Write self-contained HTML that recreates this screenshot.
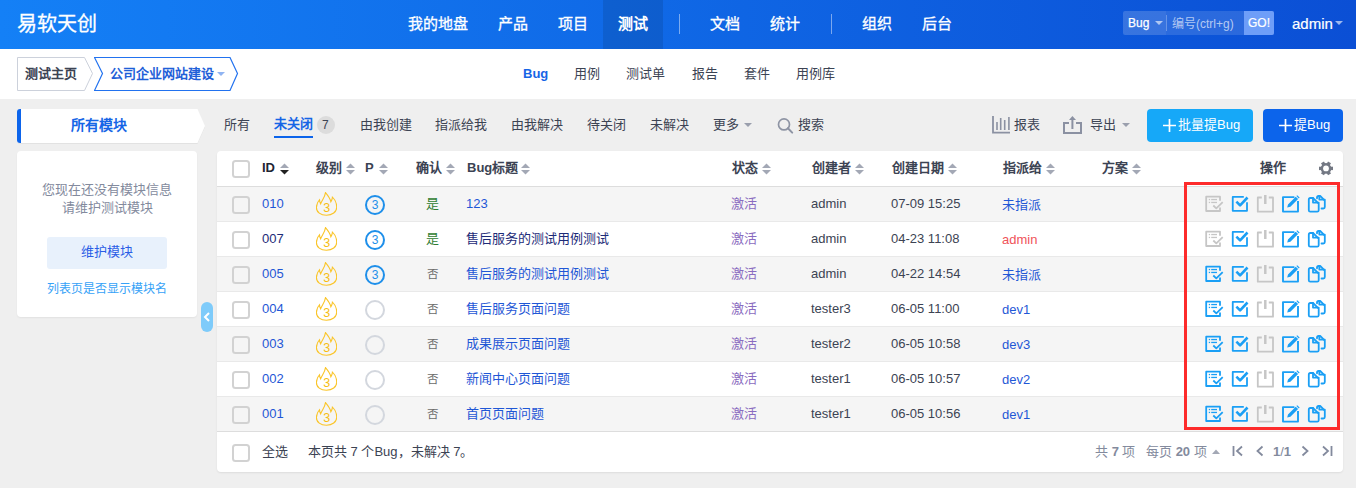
<!DOCTYPE html><html lang="zh-CN"><head><meta charset="utf-8"><style>
html,body{margin:0;padding:0}
body{width:1356px;height:488px;overflow:hidden;position:relative;background:#efefef;font-family:"Liberation Sans",sans-serif;font-size:13px;color:#3c4353}
.t{position:absolute;line-height:20px;white-space:nowrap}
</style></head><body>
<div style="position:absolute;left:0px;top:0px;width:1356px;height:49px;background:linear-gradient(90deg,#1480f6 0%,#0b4fd5 100%)"></div>
<div class="t" style="left:17px;top:14px;font-size:20px;color:#fff;-webkit-text-stroke:0.3px #fff;">易软天创</div>
<div style="position:absolute;left:603px;top:0px;width:60px;height:49px;background:rgba(0,0,0,.1)"></div>
<div class="t" style="left:408px;top:14px;font-size:15px;color:#fff;-webkit-text-stroke:0.3px #fff;">我的地盘</div>
<div class="t" style="left:498px;top:14px;font-size:15px;color:#fff;-webkit-text-stroke:0.3px #fff;">产品</div>
<div class="t" style="left:558px;top:14px;font-size:15px;color:#fff;-webkit-text-stroke:0.3px #fff;">项目</div>
<div class="t" style="left:618px;top:14px;font-size:15px;color:#fff;font-weight:bold;">测试</div>
<div class="t" style="left:710px;top:14px;font-size:15px;color:#fff;-webkit-text-stroke:0.3px #fff;">文档</div>
<div class="t" style="left:770px;top:14px;font-size:15px;color:#fff;-webkit-text-stroke:0.3px #fff;">统计</div>
<div class="t" style="left:862px;top:14px;font-size:15px;color:#fff;-webkit-text-stroke:0.3px #fff;">组织</div>
<div class="t" style="left:922px;top:14px;font-size:15px;color:#fff;-webkit-text-stroke:0.3px #fff;">后台</div>
<div style="position:absolute;left:679px;top:14px;width:1px;height:20px;background:rgba(255,255,255,.45)"></div>
<div style="position:absolute;left:831px;top:14px;width:1px;height:20px;background:rgba(255,255,255,.45)"></div>
<div style="position:absolute;left:1123px;top:11px;width:151px;height:24px;background:rgba(255,255,255,.13);border-radius:2px"></div>
<div style="position:absolute;left:1123px;top:11px;width:43px;height:24px;background:rgba(255,255,255,.06);border-radius:2px 0 0 2px"></div>
<div style="position:absolute;left:1166px;top:15px;width:1px;height:16px;background:rgba(255,255,255,.28)"></div>
<div class="t" style="left:1128px;top:13px;font-size:12px;color:#fff;-webkit-text-stroke:0.25px #fff;">Bug</div>
<svg style="position:absolute;left:1155px;top:21px" width="8" height="4" viewBox="0 0 8 4"><path d="M0 0H8L4 4Z" fill="rgba(255,255,255,.6)"/></svg>
<div class="t" style="left:1172px;top:14px;font-size:12px;color:rgba(255,255,255,.65);">编号(ctrl+g)</div>
<div style="position:absolute;left:1244px;top:11px;width:30px;height:24px;background:#6e9ef8;border-radius:0 2px 2px 0"></div>
<div class="t" style="left:1248px;top:13px;font-size:12px;color:#fff;-webkit-text-stroke:0.2px #fff;">GO!</div>
<div class="t" style="left:1292px;top:14px;font-size:15px;color:#fff;-webkit-text-stroke:0.2px #fff;">admin</div>
<svg style="position:absolute;left:1335px;top:21px" width="8" height="4" viewBox="0 0 8 4"><path d="M0 0H8L4 4Z" fill="rgba(255,255,255,.6)"/></svg>
<div style="position:absolute;left:0px;top:49px;width:1356px;height:50px;background:#fff"></div>
<svg style="position:absolute;left:17px;top:57px" width="80" height="34" viewBox="0 0 80 34"><path d="M0.5 0.5H67.5L75.5 16.5L67.5 33.5H0.5Z" fill="#fff" stroke="#ccd1db"/></svg>
<div class="t" style="left:25px;top:64px;font-size:13px;color:#3c4353;font-weight:bold;">测试主页</div>
<svg style="position:absolute;left:94px;top:57px" width="146" height="34" viewBox="0 0 146 34"><path d="M0.5 0.5H136L143.5 16.5L136 33.5H0.5L8.5 16.5Z" fill="#fff" stroke="#2272ef" stroke-width="1.2"/></svg>
<div class="t" style="left:110px;top:64px;font-size:13px;color:#1f5fd8;font-weight:bold;">公司企业网站建设</div>
<svg style="position:absolute;left:217px;top:72px" width="8" height="4" viewBox="0 0 8 4"><path d="M0 0H8L4 4Z" fill="#90b4f2"/></svg>
<div class="t" style="left:523px;top:64px;font-size:13px;color:#1565e6;font-weight:bold;">Bug</div>
<div class="t" style="left:574px;top:64px;font-size:13px;color:#3c4353;">用例</div>
<div class="t" style="left:626px;top:64px;font-size:13px;color:#3c4353;">测试单</div>
<div class="t" style="left:692px;top:64px;font-size:13px;color:#3c4353;">报告</div>
<div class="t" style="left:744px;top:64px;font-size:13px;color:#3c4353;">套件</div>
<div class="t" style="left:796px;top:64px;font-size:13px;color:#3c4353;">用例库</div>
<svg style="position:absolute;left:17px;top:109px" width="190" height="36" viewBox="0 0 190 36"><path d="M3 1H180.5L188 18L180.5 35H3Q0 35 0 32V4Q0 1 3 1Z" fill="rgba(0,0,0,.05)"/><path d="M3 0H180.5L188 17L180.5 34H3Q0 34 0 31V3Q0 0 3 0Z" fill="#fff"/><path d="M3 0H4V34H3Q0 34 0 31V3Q0 0 3 0Z" fill="#0c64eb"/></svg>
<div class="t" style="left:71px;top:115px;font-size:14px;color:#1565e6;font-weight:bold;">所有模块</div>
<div style="position:absolute;left:17px;top:151px;width:180px;height:166px;background:#fff;border-radius:4px;box-shadow:0 1px 2px rgba(0,0,0,.06)"></div>
<div class="t" style="left:42px;top:180px;font-size:13px;color:#838a9d;">您现在还没有模块信息</div>
<div class="t" style="left:62px;top:198px;font-size:13px;color:#838a9d;">请维护测试模块</div>
<div style="position:absolute;left:47px;top:237px;width:120px;height:32px;background:#e8f1fc;border-radius:3px"></div>
<div class="t" style="left:81px;top:242px;font-size:13px;color:#2a5de6;">维护模块</div>
<div class="t" style="left:47px;top:279px;font-size:12px;color:#36a2f7;">列表页是否显示模块名</div>
<div style="position:absolute;left:201px;top:302px;width:12px;height:30px;background:#7ecbfa;border-radius:6px"></div>
<svg style="position:absolute;left:201px;top:310px" width="12" height="14" viewBox="0 0 12 14"><path d="M8 3L4 7L8 11" fill="none" stroke="#fff" stroke-width="2"/></svg>
<div class="t" style="left:224px;top:115px;font-size:13px;color:#3c4353;">所有</div>
<div class="t" style="left:274px;top:114px;font-size:13px;color:#1565e6;font-weight:bold;">未关闭</div>
<div style="position:absolute;left:274px;top:136px;width:39px;height:2px;background:#0c64eb"></div>
<div style="position:absolute;left:317px;top:116px;width:18px;height:18px;background:#dcdcdc;border-radius:9px"></div>
<div class="t" style="left:322px;top:115px;font-size:12px;color:#3c4353;">7</div>
<div class="t" style="left:360px;top:115px;font-size:13px;color:#3c4353;">由我创建</div>
<div class="t" style="left:435px;top:115px;font-size:13px;color:#3c4353;">指派给我</div>
<div class="t" style="left:511px;top:115px;font-size:13px;color:#3c4353;">由我解决</div>
<div class="t" style="left:587px;top:115px;font-size:13px;color:#3c4353;">待关闭</div>
<div class="t" style="left:650px;top:115px;font-size:13px;color:#3c4353;">未解决</div>
<div class="t" style="left:713px;top:115px;font-size:13px;color:#3c4353;">更多</div>
<svg style="position:absolute;left:744px;top:123px" width="8" height="4" viewBox="0 0 8 4"><path d="M0 0H8L4 4Z" fill="#9a9fad"/></svg>
<svg style="position:absolute;left:777px;top:118px" width="17" height="17" viewBox="0 0 17 17"><circle cx="7" cy="6.4" r="5.5" fill="none" stroke="#8e94a4" stroke-width="1.7"/><path d="M10.9 10.3L15.2 14.6" stroke="#8e94a4" stroke-width="2" stroke-linecap="round"/></svg>
<div class="t" style="left:798px;top:115px;font-size:13px;color:#3c4353;">搜索</div>
<svg style="position:absolute;left:991px;top:115px" width="20" height="19" viewBox="0 0 20 19"><path d="M2 1V17.7H19" fill="none" stroke="#8b91a2" stroke-width="1.8"/><path d="M6 7V15M9.7 3V15M13.7 5V15M17.9 2V15" stroke="#8b91a2" stroke-width="1.6"/></svg>
<div class="t" style="left:1014px;top:115px;font-size:13px;color:#3c4353;">报表</div>
<svg style="position:absolute;left:1062px;top:115px" width="21" height="19" viewBox="0 0 21 19"><path d="M7 8H2V18H19V8H14" fill="none" stroke="#8b91a2" stroke-width="2"/><path d="M10.4 4V14" stroke="#8b91a2" stroke-width="2"/><path d="M7 5L10.4 1L14 5Z" fill="#8b91a2"/></svg>
<div class="t" style="left:1090px;top:115px;font-size:13px;color:#3c4353;">导出</div>
<svg style="position:absolute;left:1122px;top:123px" width="8" height="4" viewBox="0 0 8 4"><path d="M0 0H8L4 4Z" fill="#9a9fad"/></svg>
<div style="position:absolute;left:1147px;top:109px;width:106px;height:33px;background:#16a8f8;border-radius:4px"></div>
<svg style="position:absolute;left:1163px;top:119px" width="13" height="13" viewBox="0 0 13 13"><path d="M6.5 0V13M0 6.5H13" stroke="#fff" stroke-width="1.7"/></svg>
<div class="t" style="left:1178px;top:115px;font-size:13px;color:#fff;">批量提Bug</div>
<div style="position:absolute;left:1263px;top:109px;width:80px;height:33px;background:#0c64eb;border-radius:4px"></div>
<svg style="position:absolute;left:1279px;top:119px" width="13" height="13" viewBox="0 0 13 13"><path d="M6.5 0V13M0 6.5H13" stroke="#fff" stroke-width="1.7"/></svg>
<div class="t" style="left:1294px;top:115px;font-size:13px;color:#fff;">提Bug</div>
<div style="position:absolute;left:217px;top:151px;width:1126px;height:321px;background:#fff;border-radius:4px;box-shadow:0 1px 2px rgba(0,0,0,.08)"></div>
<div style="position:absolute;left:217px;top:186px;width:1126px;height:1px;background:#ddd"></div>
<div style="position:absolute;left:232px;top:160px;width:14px;height:14px;border:2px solid #d2d2d2;border-radius:3.5px"></div>
<div class="t" style="left:262px;top:158px;font-size:13px;color:#1f2533;font-weight:bold;">ID</div>
<svg style="position:absolute;left:279.5px;top:162.8px" width="9" height="12" viewBox="0 0 9 12"><path d="M0 5L4.5 0.5L9 5Z" fill="#a3a8b5"/><path d="M0 7L4.5 11.5L9 7Z" fill="#222"/></svg>
<div class="t" style="left:316px;top:158px;font-size:13px;color:#3c4353;font-weight:bold;">级别</div>
<svg style="position:absolute;left:345.5px;top:162.8px" width="9" height="12" viewBox="0 0 9 12"><path d="M0 5L4.5 0.5L9 5Z" fill="#a3a8b5"/><path d="M0 7L4.5 11.5L9 7Z" fill="#a3a8b5"/></svg>
<div class="t" style="left:365px;top:158px;font-size:13px;color:#3c4353;font-weight:bold;">P</div>
<svg style="position:absolute;left:378.5px;top:162.8px" width="9" height="12" viewBox="0 0 9 12"><path d="M0 5L4.5 0.5L9 5Z" fill="#a3a8b5"/><path d="M0 7L4.5 11.5L9 7Z" fill="#a3a8b5"/></svg>
<div class="t" style="left:416px;top:158px;font-size:13px;color:#3c4353;font-weight:bold;">确认</div>
<svg style="position:absolute;left:445.5px;top:162.8px" width="9" height="12" viewBox="0 0 9 12"><path d="M0 5L4.5 0.5L9 5Z" fill="#a3a8b5"/><path d="M0 7L4.5 11.5L9 7Z" fill="#a3a8b5"/></svg>
<div class="t" style="left:467px;top:158px;font-size:13px;color:#3c4353;font-weight:bold;">Bug标题</div>
<svg style="position:absolute;left:520.5px;top:162.8px" width="9" height="12" viewBox="0 0 9 12"><path d="M0 5L4.5 0.5L9 5Z" fill="#a3a8b5"/><path d="M0 7L4.5 11.5L9 7Z" fill="#a3a8b5"/></svg>
<div class="t" style="left:732px;top:158px;font-size:13px;color:#3c4353;font-weight:bold;">状态</div>
<svg style="position:absolute;left:761.5px;top:162.8px" width="9" height="12" viewBox="0 0 9 12"><path d="M0 5L4.5 0.5L9 5Z" fill="#a3a8b5"/><path d="M0 7L4.5 11.5L9 7Z" fill="#a3a8b5"/></svg>
<div class="t" style="left:812px;top:158px;font-size:13px;color:#3c4353;font-weight:bold;">创建者</div>
<svg style="position:absolute;left:854.5px;top:162.8px" width="9" height="12" viewBox="0 0 9 12"><path d="M0 5L4.5 0.5L9 5Z" fill="#a3a8b5"/><path d="M0 7L4.5 11.5L9 7Z" fill="#a3a8b5"/></svg>
<div class="t" style="left:892px;top:158px;font-size:13px;color:#3c4353;font-weight:bold;">创建日期</div>
<svg style="position:absolute;left:947.5px;top:162.8px" width="9" height="12" viewBox="0 0 9 12"><path d="M0 5L4.5 0.5L9 5Z" fill="#a3a8b5"/><path d="M0 7L4.5 11.5L9 7Z" fill="#a3a8b5"/></svg>
<div class="t" style="left:1003px;top:158px;font-size:13px;color:#3c4353;font-weight:bold;">指派给</div>
<svg style="position:absolute;left:1045.5px;top:162.8px" width="9" height="12" viewBox="0 0 9 12"><path d="M0 5L4.5 0.5L9 5Z" fill="#a3a8b5"/><path d="M0 7L4.5 11.5L9 7Z" fill="#a3a8b5"/></svg>
<div class="t" style="left:1102px;top:158px;font-size:13px;color:#3c4353;font-weight:bold;">方案</div>
<svg style="position:absolute;left:1131.5px;top:162.8px" width="9" height="12" viewBox="0 0 9 12"><path d="M0 5L4.5 0.5L9 5Z" fill="#a3a8b5"/><path d="M0 7L4.5 11.5L9 7Z" fill="#a3a8b5"/></svg>
<div class="t" style="left:1260px;top:158px;font-size:13px;color:#3c4353;font-weight:bold;">操作</div>
<svg style="position:absolute;left:1319px;top:161px" width="15" height="15" viewBox="0 0 15 15"><g fill="#737883"><circle cx="7" cy="7.4" r="5.3"/><rect x="5.3" y="0.4" width="3.4" height="3.2" transform="rotate(30 7 7.4)"/><rect x="5.3" y="0.4" width="3.4" height="3.2" transform="rotate(90 7 7.4)"/><rect x="5.3" y="0.4" width="3.4" height="3.2" transform="rotate(150 7 7.4)"/><rect x="5.3" y="0.4" width="3.4" height="3.2" transform="rotate(210 7 7.4)"/><rect x="5.3" y="0.4" width="3.4" height="3.2" transform="rotate(270 7 7.4)"/><rect x="5.3" y="0.4" width="3.4" height="3.2" transform="rotate(330 7 7.4)"/></g><circle cx="7" cy="7.4" r="2.9" fill="#fff"/></svg>
<div style="position:absolute;left:217px;top:187px;width:1126px;height:34px;background:#f5f5f5"></div>
<div style="position:absolute;left:217px;top:221px;width:1126px;height:1px;background:#e9e9e9"></div>
<div style="position:absolute;left:232px;top:196px;width:14px;height:14px;border:2px solid #d2d2d2;border-radius:3.5px"></div>
<div class="t" style="left:262px;top:194px;font-size:13px;color:#1f57d6;">010</div>
<svg style="position:absolute;left:316px;top:192px" width="21" height="25" viewBox="0 0 21 25"><path d="M4.6 11.8C6 8 9 5 9.5 0.6C12 3.5 14 6 14.9 9.8C15.8 8.3 16.3 6.8 16.4 5.2C19.2 7.8 20.7 11 20.7 15.2C20.7 20 16.2 23.3 10.4 23.3C4.6 23.3 0.4 20 0.4 15.6C0.4 12.6 1.6 9.8 3.5 7.75C3.6 9.3 4 10.7 4.6 11.8Z" fill="none" stroke="#fac52a" stroke-width="1.1"/><text x="10.8" y="19.5" text-anchor="middle" font-size="12.5" fill="#f6bd12" transform="scale(1 1)" font-family="Liberation Sans">3</text></svg>
<svg style="position:absolute;left:365px;top:195px" width="20" height="20" viewBox="0 0 20 20"><circle cx="10" cy="10" r="9" fill="none" stroke="#1e8fea" stroke-width="2"/><text x="10" y="14.2" text-anchor="middle" font-size="12" fill="#1e8fea" font-family="Liberation Sans">3</text></svg>
<div class="t" style="left:426px;top:194px;font-size:13px;color:#2f7d32;">是</div>
<div class="t" style="left:466px;top:194px;font-size:13px;color:#1f57d6;">123</div>
<div class="t" style="left:731px;top:194px;font-size:13px;color:#8a6bc0;">激活</div>
<div class="t" style="left:811px;top:194px;font-size:13px;color:#3c4353;">admin</div>
<div class="t" style="left:891px;top:194px;font-size:13px;color:#3c4353;">07-09 15:25</div>
<div class="t" style="left:1002px;top:195px;font-size:13px;color:#1f57d6;">未指派</div>
<svg style="position:absolute;left:1204px;top:195px" width="21" height="19" viewBox="0 0 21 19"><g fill="none" stroke="#c6c6c6" stroke-width="1.8" stroke-linejoin="round"><path d="M16 5.8V1.7H2.2V16H16V12.6"/><path d="M9.3 10.5L12.3 13.4L18.7 7.2"/></g><g fill="#c6c6c6"><rect x="4.8" y="3.9" width="1.3" height="1.3"/><rect x="7.2" y="3.9" width="5.8" height="1.3"/><rect x="4.8" y="6.8" width="1.3" height="1.3"/><rect x="7.2" y="6.8" width="5.8" height="1.3"/></g></svg>
<svg style="position:absolute;left:1231px;top:195px" width="19" height="18" viewBox="0 0 19 18"><g fill="none" stroke="#1a9ff5" stroke-linejoin="round"><path d="M12.8 1.9H1.75V15.8H16V7.2" stroke-width="1.8"/><path d="M5.4 6.6L9.1 10.3L16.5 2.5" stroke-width="2.6"/></g></svg>
<svg style="position:absolute;left:1256px;top:194px" width="19" height="20" viewBox="0 0 19 20"><g fill="none" stroke="#c6c6c6" stroke-linejoin="round"><path d="M5.8 3.5H1.8V17.7H17V3.5H12.8" stroke-width="1.8"/><path d="M9.3 1V10" stroke-width="2.5"/></g></svg>
<svg style="position:absolute;left:1281px;top:194px" width="20" height="20" viewBox="0 0 20 20"><g fill="none" stroke="#1a9ff5" stroke-width="1.9" stroke-linejoin="round"><path d="M13.4 3.1H2V17.6H17V7"/></g><path d="M6.2 13.6L7 10.4L14.7 2.7L17.1 5.1L9.4 12.8Z M15.4 2L16.2 1.2L18.6 3.6L17.8 4.4Z" fill="#1a9ff5"/></svg>
<svg style="position:absolute;left:1307px;top:194px" width="20" height="20" viewBox="0 0 20 20"><g fill="none" stroke="#1a9ff5" stroke-width="1.8" stroke-linejoin="round" stroke-linecap="round"><path d="M6 4H3.3Q1.8 4 1.8 5.5V16.2Q1.8 17.7 3.3 17.7H10.2Q11.7 17.7 11.7 16.2V9.7Z"/><path d="M6 4V8.6H11.7"/><path d="M10 4.3V3.5Q10 2 11.5 2H13.2L17.8 6.6V13Q17.8 14.5 16.3 14.5H14.5"/><path d="M12.3 2V5.6H17.8"/></g></svg>
<div style="position:absolute;left:217px;top:256px;width:1126px;height:1px;background:#e9e9e9"></div>
<div style="position:absolute;left:232px;top:231px;width:14px;height:14px;border:2px solid #d2d2d2;border-radius:3.5px"></div>
<div class="t" style="left:262px;top:229px;font-size:13px;color:#1d2b78;">007</div>
<svg style="position:absolute;left:316px;top:227px" width="21" height="25" viewBox="0 0 21 25"><path d="M4.6 11.8C6 8 9 5 9.5 0.6C12 3.5 14 6 14.9 9.8C15.8 8.3 16.3 6.8 16.4 5.2C19.2 7.8 20.7 11 20.7 15.2C20.7 20 16.2 23.3 10.4 23.3C4.6 23.3 0.4 20 0.4 15.6C0.4 12.6 1.6 9.8 3.5 7.75C3.6 9.3 4 10.7 4.6 11.8Z" fill="none" stroke="#fac52a" stroke-width="1.1"/><text x="10.8" y="19.5" text-anchor="middle" font-size="12.5" fill="#f6bd12" transform="scale(1 1)" font-family="Liberation Sans">3</text></svg>
<svg style="position:absolute;left:365px;top:230px" width="20" height="20" viewBox="0 0 20 20"><circle cx="10" cy="10" r="9" fill="none" stroke="#1e8fea" stroke-width="2"/><text x="10" y="14.2" text-anchor="middle" font-size="12" fill="#1e8fea" font-family="Liberation Sans">3</text></svg>
<div class="t" style="left:426px;top:229px;font-size:13px;color:#2f7d32;">是</div>
<div class="t" style="left:466px;top:229px;font-size:13px;color:#1d2b78;">售后服务的测试用例测试</div>
<div class="t" style="left:731px;top:229px;font-size:13px;color:#8a6bc0;">激活</div>
<div class="t" style="left:811px;top:229px;font-size:13px;color:#3c4353;">admin</div>
<div class="t" style="left:891px;top:229px;font-size:13px;color:#3c4353;">04-23 11:08</div>
<div class="t" style="left:1002px;top:230px;font-size:13px;color:#f0535a;">admin</div>
<svg style="position:absolute;left:1204px;top:230px" width="21" height="19" viewBox="0 0 21 19"><g fill="none" stroke="#c6c6c6" stroke-width="1.8" stroke-linejoin="round"><path d="M16 5.8V1.7H2.2V16H16V12.6"/><path d="M9.3 10.5L12.3 13.4L18.7 7.2"/></g><g fill="#c6c6c6"><rect x="4.8" y="3.9" width="1.3" height="1.3"/><rect x="7.2" y="3.9" width="5.8" height="1.3"/><rect x="4.8" y="6.8" width="1.3" height="1.3"/><rect x="7.2" y="6.8" width="5.8" height="1.3"/></g></svg>
<svg style="position:absolute;left:1231px;top:230px" width="19" height="18" viewBox="0 0 19 18"><g fill="none" stroke="#1a9ff5" stroke-linejoin="round"><path d="M12.8 1.9H1.75V15.8H16V7.2" stroke-width="1.8"/><path d="M5.4 6.6L9.1 10.3L16.5 2.5" stroke-width="2.6"/></g></svg>
<svg style="position:absolute;left:1256px;top:229px" width="19" height="20" viewBox="0 0 19 20"><g fill="none" stroke="#c6c6c6" stroke-linejoin="round"><path d="M5.8 3.5H1.8V17.7H17V3.5H12.8" stroke-width="1.8"/><path d="M9.3 1V10" stroke-width="2.5"/></g></svg>
<svg style="position:absolute;left:1281px;top:229px" width="20" height="20" viewBox="0 0 20 20"><g fill="none" stroke="#1a9ff5" stroke-width="1.9" stroke-linejoin="round"><path d="M13.4 3.1H2V17.6H17V7"/></g><path d="M6.2 13.6L7 10.4L14.7 2.7L17.1 5.1L9.4 12.8Z M15.4 2L16.2 1.2L18.6 3.6L17.8 4.4Z" fill="#1a9ff5"/></svg>
<svg style="position:absolute;left:1307px;top:229px" width="20" height="20" viewBox="0 0 20 20"><g fill="none" stroke="#1a9ff5" stroke-width="1.8" stroke-linejoin="round" stroke-linecap="round"><path d="M6 4H3.3Q1.8 4 1.8 5.5V16.2Q1.8 17.7 3.3 17.7H10.2Q11.7 17.7 11.7 16.2V9.7Z"/><path d="M6 4V8.6H11.7"/><path d="M10 4.3V3.5Q10 2 11.5 2H13.2L17.8 6.6V13Q17.8 14.5 16.3 14.5H14.5"/><path d="M12.3 2V5.6H17.8"/></g></svg>
<div style="position:absolute;left:217px;top:257px;width:1126px;height:34px;background:#f5f5f5"></div>
<div style="position:absolute;left:217px;top:291px;width:1126px;height:1px;background:#e9e9e9"></div>
<div style="position:absolute;left:232px;top:266px;width:14px;height:14px;border:2px solid #d2d2d2;border-radius:3.5px"></div>
<div class="t" style="left:262px;top:264px;font-size:13px;color:#1f57d6;">005</div>
<svg style="position:absolute;left:316px;top:262px" width="21" height="25" viewBox="0 0 21 25"><path d="M4.6 11.8C6 8 9 5 9.5 0.6C12 3.5 14 6 14.9 9.8C15.8 8.3 16.3 6.8 16.4 5.2C19.2 7.8 20.7 11 20.7 15.2C20.7 20 16.2 23.3 10.4 23.3C4.6 23.3 0.4 20 0.4 15.6C0.4 12.6 1.6 9.8 3.5 7.75C3.6 9.3 4 10.7 4.6 11.8Z" fill="none" stroke="#fac52a" stroke-width="1.1"/><text x="10.8" y="19.5" text-anchor="middle" font-size="12.5" fill="#f6bd12" transform="scale(1 1)" font-family="Liberation Sans">3</text></svg>
<svg style="position:absolute;left:365px;top:265px" width="20" height="20" viewBox="0 0 20 20"><circle cx="10" cy="10" r="9" fill="none" stroke="#1e8fea" stroke-width="2"/><text x="10" y="14.2" text-anchor="middle" font-size="12" fill="#1e8fea" font-family="Liberation Sans">3</text></svg>
<div class="t" style="left:426.5px;top:264px;font-size:11.5px;color:#6b6b6b;">否</div>
<div class="t" style="left:466px;top:264px;font-size:13px;color:#1f57d6;">售后服务的测试用例测试</div>
<div class="t" style="left:731px;top:264px;font-size:13px;color:#8a6bc0;">激活</div>
<div class="t" style="left:811px;top:264px;font-size:13px;color:#3c4353;">admin</div>
<div class="t" style="left:891px;top:264px;font-size:13px;color:#3c4353;">04-22 14:54</div>
<div class="t" style="left:1002px;top:265px;font-size:13px;color:#1f57d6;">未指派</div>
<svg style="position:absolute;left:1204px;top:265px" width="21" height="19" viewBox="0 0 21 19"><g fill="none" stroke="#1a9ff5" stroke-width="1.8" stroke-linejoin="round"><path d="M16 5.8V1.7H2.2V16H16V12.6"/><path d="M9.3 10.5L12.3 13.4L18.7 7.2"/></g><g fill="#1a9ff5"><rect x="4.8" y="3.9" width="1.3" height="1.3"/><rect x="7.2" y="3.9" width="5.8" height="1.3"/><rect x="4.8" y="6.8" width="1.3" height="1.3"/><rect x="7.2" y="6.8" width="5.8" height="1.3"/></g></svg>
<svg style="position:absolute;left:1231px;top:265px" width="19" height="18" viewBox="0 0 19 18"><g fill="none" stroke="#1a9ff5" stroke-linejoin="round"><path d="M12.8 1.9H1.75V15.8H16V7.2" stroke-width="1.8"/><path d="M5.4 6.6L9.1 10.3L16.5 2.5" stroke-width="2.6"/></g></svg>
<svg style="position:absolute;left:1256px;top:264px" width="19" height="20" viewBox="0 0 19 20"><g fill="none" stroke="#c6c6c6" stroke-linejoin="round"><path d="M5.8 3.5H1.8V17.7H17V3.5H12.8" stroke-width="1.8"/><path d="M9.3 1V10" stroke-width="2.5"/></g></svg>
<svg style="position:absolute;left:1281px;top:264px" width="20" height="20" viewBox="0 0 20 20"><g fill="none" stroke="#1a9ff5" stroke-width="1.9" stroke-linejoin="round"><path d="M13.4 3.1H2V17.6H17V7"/></g><path d="M6.2 13.6L7 10.4L14.7 2.7L17.1 5.1L9.4 12.8Z M15.4 2L16.2 1.2L18.6 3.6L17.8 4.4Z" fill="#1a9ff5"/></svg>
<svg style="position:absolute;left:1307px;top:264px" width="20" height="20" viewBox="0 0 20 20"><g fill="none" stroke="#1a9ff5" stroke-width="1.8" stroke-linejoin="round" stroke-linecap="round"><path d="M6 4H3.3Q1.8 4 1.8 5.5V16.2Q1.8 17.7 3.3 17.7H10.2Q11.7 17.7 11.7 16.2V9.7Z"/><path d="M6 4V8.6H11.7"/><path d="M10 4.3V3.5Q10 2 11.5 2H13.2L17.8 6.6V13Q17.8 14.5 16.3 14.5H14.5"/><path d="M12.3 2V5.6H17.8"/></g></svg>
<div style="position:absolute;left:217px;top:326px;width:1126px;height:1px;background:#e9e9e9"></div>
<div style="position:absolute;left:232px;top:301px;width:14px;height:14px;border:2px solid #d2d2d2;border-radius:3.5px"></div>
<div class="t" style="left:262px;top:299px;font-size:13px;color:#1f57d6;">004</div>
<svg style="position:absolute;left:316px;top:297px" width="21" height="25" viewBox="0 0 21 25"><path d="M4.6 11.8C6 8 9 5 9.5 0.6C12 3.5 14 6 14.9 9.8C15.8 8.3 16.3 6.8 16.4 5.2C19.2 7.8 20.7 11 20.7 15.2C20.7 20 16.2 23.3 10.4 23.3C4.6 23.3 0.4 20 0.4 15.6C0.4 12.6 1.6 9.8 3.5 7.75C3.6 9.3 4 10.7 4.6 11.8Z" fill="none" stroke="#fac52a" stroke-width="1.1"/><text x="10.8" y="19.5" text-anchor="middle" font-size="12.5" fill="#f6bd12" transform="scale(1 1)" font-family="Liberation Sans">3</text></svg>
<svg style="position:absolute;left:365px;top:300px" width="20" height="20" viewBox="0 0 20 20"><circle cx="10" cy="10" r="9" fill="none" stroke="#d3d7de" stroke-width="2"/></svg>
<div class="t" style="left:426.5px;top:299px;font-size:11.5px;color:#6b6b6b;">否</div>
<div class="t" style="left:466px;top:299px;font-size:13px;color:#1f57d6;">售后服务页面问题</div>
<div class="t" style="left:731px;top:299px;font-size:13px;color:#8a6bc0;">激活</div>
<div class="t" style="left:811px;top:299px;font-size:13px;color:#3c4353;">tester3</div>
<div class="t" style="left:891px;top:299px;font-size:13px;color:#3c4353;">06-05 11:00</div>
<div class="t" style="left:1002px;top:300px;font-size:13px;color:#1f57d6;">dev1</div>
<svg style="position:absolute;left:1204px;top:300px" width="21" height="19" viewBox="0 0 21 19"><g fill="none" stroke="#1a9ff5" stroke-width="1.8" stroke-linejoin="round"><path d="M16 5.8V1.7H2.2V16H16V12.6"/><path d="M9.3 10.5L12.3 13.4L18.7 7.2"/></g><g fill="#1a9ff5"><rect x="4.8" y="3.9" width="1.3" height="1.3"/><rect x="7.2" y="3.9" width="5.8" height="1.3"/><rect x="4.8" y="6.8" width="1.3" height="1.3"/><rect x="7.2" y="6.8" width="5.8" height="1.3"/></g></svg>
<svg style="position:absolute;left:1231px;top:300px" width="19" height="18" viewBox="0 0 19 18"><g fill="none" stroke="#1a9ff5" stroke-linejoin="round"><path d="M12.8 1.9H1.75V15.8H16V7.2" stroke-width="1.8"/><path d="M5.4 6.6L9.1 10.3L16.5 2.5" stroke-width="2.6"/></g></svg>
<svg style="position:absolute;left:1256px;top:299px" width="19" height="20" viewBox="0 0 19 20"><g fill="none" stroke="#c6c6c6" stroke-linejoin="round"><path d="M5.8 3.5H1.8V17.7H17V3.5H12.8" stroke-width="1.8"/><path d="M9.3 1V10" stroke-width="2.5"/></g></svg>
<svg style="position:absolute;left:1281px;top:299px" width="20" height="20" viewBox="0 0 20 20"><g fill="none" stroke="#1a9ff5" stroke-width="1.9" stroke-linejoin="round"><path d="M13.4 3.1H2V17.6H17V7"/></g><path d="M6.2 13.6L7 10.4L14.7 2.7L17.1 5.1L9.4 12.8Z M15.4 2L16.2 1.2L18.6 3.6L17.8 4.4Z" fill="#1a9ff5"/></svg>
<svg style="position:absolute;left:1307px;top:299px" width="20" height="20" viewBox="0 0 20 20"><g fill="none" stroke="#1a9ff5" stroke-width="1.8" stroke-linejoin="round" stroke-linecap="round"><path d="M6 4H3.3Q1.8 4 1.8 5.5V16.2Q1.8 17.7 3.3 17.7H10.2Q11.7 17.7 11.7 16.2V9.7Z"/><path d="M6 4V8.6H11.7"/><path d="M10 4.3V3.5Q10 2 11.5 2H13.2L17.8 6.6V13Q17.8 14.5 16.3 14.5H14.5"/><path d="M12.3 2V5.6H17.8"/></g></svg>
<div style="position:absolute;left:217px;top:327px;width:1126px;height:34px;background:#f5f5f5"></div>
<div style="position:absolute;left:217px;top:361px;width:1126px;height:1px;background:#e9e9e9"></div>
<div style="position:absolute;left:232px;top:336px;width:14px;height:14px;border:2px solid #d2d2d2;border-radius:3.5px"></div>
<div class="t" style="left:262px;top:334px;font-size:13px;color:#1f57d6;">003</div>
<svg style="position:absolute;left:316px;top:332px" width="21" height="25" viewBox="0 0 21 25"><path d="M4.6 11.8C6 8 9 5 9.5 0.6C12 3.5 14 6 14.9 9.8C15.8 8.3 16.3 6.8 16.4 5.2C19.2 7.8 20.7 11 20.7 15.2C20.7 20 16.2 23.3 10.4 23.3C4.6 23.3 0.4 20 0.4 15.6C0.4 12.6 1.6 9.8 3.5 7.75C3.6 9.3 4 10.7 4.6 11.8Z" fill="none" stroke="#fac52a" stroke-width="1.1"/><text x="10.8" y="19.5" text-anchor="middle" font-size="12.5" fill="#f6bd12" transform="scale(1 1)" font-family="Liberation Sans">3</text></svg>
<svg style="position:absolute;left:365px;top:335px" width="20" height="20" viewBox="0 0 20 20"><circle cx="10" cy="10" r="9" fill="none" stroke="#d3d7de" stroke-width="2"/></svg>
<div class="t" style="left:426.5px;top:334px;font-size:11.5px;color:#6b6b6b;">否</div>
<div class="t" style="left:466px;top:334px;font-size:13px;color:#1f57d6;">成果展示页面问题</div>
<div class="t" style="left:731px;top:334px;font-size:13px;color:#8a6bc0;">激活</div>
<div class="t" style="left:811px;top:334px;font-size:13px;color:#3c4353;">tester2</div>
<div class="t" style="left:891px;top:334px;font-size:13px;color:#3c4353;">06-05 10:58</div>
<div class="t" style="left:1002px;top:335px;font-size:13px;color:#1f57d6;">dev3</div>
<svg style="position:absolute;left:1204px;top:335px" width="21" height="19" viewBox="0 0 21 19"><g fill="none" stroke="#1a9ff5" stroke-width="1.8" stroke-linejoin="round"><path d="M16 5.8V1.7H2.2V16H16V12.6"/><path d="M9.3 10.5L12.3 13.4L18.7 7.2"/></g><g fill="#1a9ff5"><rect x="4.8" y="3.9" width="1.3" height="1.3"/><rect x="7.2" y="3.9" width="5.8" height="1.3"/><rect x="4.8" y="6.8" width="1.3" height="1.3"/><rect x="7.2" y="6.8" width="5.8" height="1.3"/></g></svg>
<svg style="position:absolute;left:1231px;top:335px" width="19" height="18" viewBox="0 0 19 18"><g fill="none" stroke="#1a9ff5" stroke-linejoin="round"><path d="M12.8 1.9H1.75V15.8H16V7.2" stroke-width="1.8"/><path d="M5.4 6.6L9.1 10.3L16.5 2.5" stroke-width="2.6"/></g></svg>
<svg style="position:absolute;left:1256px;top:334px" width="19" height="20" viewBox="0 0 19 20"><g fill="none" stroke="#c6c6c6" stroke-linejoin="round"><path d="M5.8 3.5H1.8V17.7H17V3.5H12.8" stroke-width="1.8"/><path d="M9.3 1V10" stroke-width="2.5"/></g></svg>
<svg style="position:absolute;left:1281px;top:334px" width="20" height="20" viewBox="0 0 20 20"><g fill="none" stroke="#1a9ff5" stroke-width="1.9" stroke-linejoin="round"><path d="M13.4 3.1H2V17.6H17V7"/></g><path d="M6.2 13.6L7 10.4L14.7 2.7L17.1 5.1L9.4 12.8Z M15.4 2L16.2 1.2L18.6 3.6L17.8 4.4Z" fill="#1a9ff5"/></svg>
<svg style="position:absolute;left:1307px;top:334px" width="20" height="20" viewBox="0 0 20 20"><g fill="none" stroke="#1a9ff5" stroke-width="1.8" stroke-linejoin="round" stroke-linecap="round"><path d="M6 4H3.3Q1.8 4 1.8 5.5V16.2Q1.8 17.7 3.3 17.7H10.2Q11.7 17.7 11.7 16.2V9.7Z"/><path d="M6 4V8.6H11.7"/><path d="M10 4.3V3.5Q10 2 11.5 2H13.2L17.8 6.6V13Q17.8 14.5 16.3 14.5H14.5"/><path d="M12.3 2V5.6H17.8"/></g></svg>
<div style="position:absolute;left:217px;top:396px;width:1126px;height:1px;background:#e9e9e9"></div>
<div style="position:absolute;left:232px;top:371px;width:14px;height:14px;border:2px solid #d2d2d2;border-radius:3.5px"></div>
<div class="t" style="left:262px;top:369px;font-size:13px;color:#1f57d6;">002</div>
<svg style="position:absolute;left:316px;top:367px" width="21" height="25" viewBox="0 0 21 25"><path d="M4.6 11.8C6 8 9 5 9.5 0.6C12 3.5 14 6 14.9 9.8C15.8 8.3 16.3 6.8 16.4 5.2C19.2 7.8 20.7 11 20.7 15.2C20.7 20 16.2 23.3 10.4 23.3C4.6 23.3 0.4 20 0.4 15.6C0.4 12.6 1.6 9.8 3.5 7.75C3.6 9.3 4 10.7 4.6 11.8Z" fill="none" stroke="#fac52a" stroke-width="1.1"/><text x="10.8" y="19.5" text-anchor="middle" font-size="12.5" fill="#f6bd12" transform="scale(1 1)" font-family="Liberation Sans">3</text></svg>
<svg style="position:absolute;left:365px;top:370px" width="20" height="20" viewBox="0 0 20 20"><circle cx="10" cy="10" r="9" fill="none" stroke="#d3d7de" stroke-width="2"/></svg>
<div class="t" style="left:426.5px;top:369px;font-size:11.5px;color:#6b6b6b;">否</div>
<div class="t" style="left:466px;top:369px;font-size:13px;color:#1f57d6;">新闻中心页面问题</div>
<div class="t" style="left:731px;top:369px;font-size:13px;color:#8a6bc0;">激活</div>
<div class="t" style="left:811px;top:369px;font-size:13px;color:#3c4353;">tester1</div>
<div class="t" style="left:891px;top:369px;font-size:13px;color:#3c4353;">06-05 10:57</div>
<div class="t" style="left:1002px;top:370px;font-size:13px;color:#1f57d6;">dev2</div>
<svg style="position:absolute;left:1204px;top:370px" width="21" height="19" viewBox="0 0 21 19"><g fill="none" stroke="#1a9ff5" stroke-width="1.8" stroke-linejoin="round"><path d="M16 5.8V1.7H2.2V16H16V12.6"/><path d="M9.3 10.5L12.3 13.4L18.7 7.2"/></g><g fill="#1a9ff5"><rect x="4.8" y="3.9" width="1.3" height="1.3"/><rect x="7.2" y="3.9" width="5.8" height="1.3"/><rect x="4.8" y="6.8" width="1.3" height="1.3"/><rect x="7.2" y="6.8" width="5.8" height="1.3"/></g></svg>
<svg style="position:absolute;left:1231px;top:370px" width="19" height="18" viewBox="0 0 19 18"><g fill="none" stroke="#1a9ff5" stroke-linejoin="round"><path d="M12.8 1.9H1.75V15.8H16V7.2" stroke-width="1.8"/><path d="M5.4 6.6L9.1 10.3L16.5 2.5" stroke-width="2.6"/></g></svg>
<svg style="position:absolute;left:1256px;top:369px" width="19" height="20" viewBox="0 0 19 20"><g fill="none" stroke="#c6c6c6" stroke-linejoin="round"><path d="M5.8 3.5H1.8V17.7H17V3.5H12.8" stroke-width="1.8"/><path d="M9.3 1V10" stroke-width="2.5"/></g></svg>
<svg style="position:absolute;left:1281px;top:369px" width="20" height="20" viewBox="0 0 20 20"><g fill="none" stroke="#1a9ff5" stroke-width="1.9" stroke-linejoin="round"><path d="M13.4 3.1H2V17.6H17V7"/></g><path d="M6.2 13.6L7 10.4L14.7 2.7L17.1 5.1L9.4 12.8Z M15.4 2L16.2 1.2L18.6 3.6L17.8 4.4Z" fill="#1a9ff5"/></svg>
<svg style="position:absolute;left:1307px;top:369px" width="20" height="20" viewBox="0 0 20 20"><g fill="none" stroke="#1a9ff5" stroke-width="1.8" stroke-linejoin="round" stroke-linecap="round"><path d="M6 4H3.3Q1.8 4 1.8 5.5V16.2Q1.8 17.7 3.3 17.7H10.2Q11.7 17.7 11.7 16.2V9.7Z"/><path d="M6 4V8.6H11.7"/><path d="M10 4.3V3.5Q10 2 11.5 2H13.2L17.8 6.6V13Q17.8 14.5 16.3 14.5H14.5"/><path d="M12.3 2V5.6H17.8"/></g></svg>
<div style="position:absolute;left:217px;top:397px;width:1126px;height:34px;background:#f5f5f5"></div>
<div style="position:absolute;left:232px;top:406px;width:14px;height:14px;border:2px solid #d2d2d2;border-radius:3.5px"></div>
<div class="t" style="left:262px;top:404px;font-size:13px;color:#1f57d6;">001</div>
<svg style="position:absolute;left:316px;top:402px" width="21" height="25" viewBox="0 0 21 25"><path d="M4.6 11.8C6 8 9 5 9.5 0.6C12 3.5 14 6 14.9 9.8C15.8 8.3 16.3 6.8 16.4 5.2C19.2 7.8 20.7 11 20.7 15.2C20.7 20 16.2 23.3 10.4 23.3C4.6 23.3 0.4 20 0.4 15.6C0.4 12.6 1.6 9.8 3.5 7.75C3.6 9.3 4 10.7 4.6 11.8Z" fill="none" stroke="#fac52a" stroke-width="1.1"/><text x="10.8" y="19.5" text-anchor="middle" font-size="12.5" fill="#f6bd12" transform="scale(1 1)" font-family="Liberation Sans">3</text></svg>
<svg style="position:absolute;left:365px;top:405px" width="20" height="20" viewBox="0 0 20 20"><circle cx="10" cy="10" r="9" fill="none" stroke="#d3d7de" stroke-width="2"/></svg>
<div class="t" style="left:426.5px;top:404px;font-size:11.5px;color:#6b6b6b;">否</div>
<div class="t" style="left:466px;top:404px;font-size:13px;color:#1f57d6;">首页页面问题</div>
<div class="t" style="left:731px;top:404px;font-size:13px;color:#8a6bc0;">激活</div>
<div class="t" style="left:811px;top:404px;font-size:13px;color:#3c4353;">tester1</div>
<div class="t" style="left:891px;top:404px;font-size:13px;color:#3c4353;">06-05 10:56</div>
<div class="t" style="left:1002px;top:405px;font-size:13px;color:#1f57d6;">dev1</div>
<svg style="position:absolute;left:1204px;top:405px" width="21" height="19" viewBox="0 0 21 19"><g fill="none" stroke="#1a9ff5" stroke-width="1.8" stroke-linejoin="round"><path d="M16 5.8V1.7H2.2V16H16V12.6"/><path d="M9.3 10.5L12.3 13.4L18.7 7.2"/></g><g fill="#1a9ff5"><rect x="4.8" y="3.9" width="1.3" height="1.3"/><rect x="7.2" y="3.9" width="5.8" height="1.3"/><rect x="4.8" y="6.8" width="1.3" height="1.3"/><rect x="7.2" y="6.8" width="5.8" height="1.3"/></g></svg>
<svg style="position:absolute;left:1231px;top:405px" width="19" height="18" viewBox="0 0 19 18"><g fill="none" stroke="#1a9ff5" stroke-linejoin="round"><path d="M12.8 1.9H1.75V15.8H16V7.2" stroke-width="1.8"/><path d="M5.4 6.6L9.1 10.3L16.5 2.5" stroke-width="2.6"/></g></svg>
<svg style="position:absolute;left:1256px;top:404px" width="19" height="20" viewBox="0 0 19 20"><g fill="none" stroke="#c6c6c6" stroke-linejoin="round"><path d="M5.8 3.5H1.8V17.7H17V3.5H12.8" stroke-width="1.8"/><path d="M9.3 1V10" stroke-width="2.5"/></g></svg>
<svg style="position:absolute;left:1281px;top:404px" width="20" height="20" viewBox="0 0 20 20"><g fill="none" stroke="#1a9ff5" stroke-width="1.9" stroke-linejoin="round"><path d="M13.4 3.1H2V17.6H17V7"/></g><path d="M6.2 13.6L7 10.4L14.7 2.7L17.1 5.1L9.4 12.8Z M15.4 2L16.2 1.2L18.6 3.6L17.8 4.4Z" fill="#1a9ff5"/></svg>
<svg style="position:absolute;left:1307px;top:404px" width="20" height="20" viewBox="0 0 20 20"><g fill="none" stroke="#1a9ff5" stroke-width="1.8" stroke-linejoin="round" stroke-linecap="round"><path d="M6 4H3.3Q1.8 4 1.8 5.5V16.2Q1.8 17.7 3.3 17.7H10.2Q11.7 17.7 11.7 16.2V9.7Z"/><path d="M6 4V8.6H11.7"/><path d="M10 4.3V3.5Q10 2 11.5 2H13.2L17.8 6.6V13Q17.8 14.5 16.3 14.5H14.5"/><path d="M12.3 2V5.6H17.8"/></g></svg>
<div style="position:absolute;left:217px;top:431px;width:1126px;height:1px;background:#ddd"></div>
<div style="position:absolute;left:232px;top:444px;width:14px;height:14px;border:2px solid #d2d2d2;border-radius:3.5px"></div>
<div class="t" style="left:262px;top:442px;font-size:13px;color:#3c4353;">全选</div>
<div class="t" style="left:308px;top:442px;font-size:13px;color:#3c4353;">本页共 7 个Bug，未解决 7。</div>
<div class="t" style="left:1095px;top:442px;font-size:13px;color:#838a9d;">共 <b>7</b> 项</div>
<div class="t" style="left:1146px;top:442px;font-size:13px;color:#838a9d;">每页 <b>20</b> 项</div>
<svg style="position:absolute;left:1212px;top:449px" width="8" height="5" viewBox="0 0 8 5"><path d="M0 5H8L4 0.5Z" fill="#a3a8b5"/></svg>
<svg style="position:absolute;left:1232px;top:445px" width="12" height="12" viewBox="0 0 12 12"><path d="M1.5 1V11" stroke="#838a9d" stroke-width="1.8"/><path d="M10 1.5L5 6L10 10.5" fill="none" stroke="#838a9d" stroke-width="1.8"/></svg>
<svg style="position:absolute;left:1256px;top:445px" width="8" height="12" viewBox="0 0 8 12"><path d="M6.5 1.5L1.5 6L6.5 10.5" fill="none" stroke="#838a9d" stroke-width="1.8"/></svg>
<div class="t" style="left:1273px;top:442px;font-size:13px;color:#838a9d;"><b>1</b>/<b>1</b></div>
<svg style="position:absolute;left:1301px;top:445px" width="8" height="12" viewBox="0 0 8 12"><path d="M1.5 1.5L6.5 6L1.5 10.5" fill="none" stroke="#838a9d" stroke-width="1.8"/></svg>
<svg style="position:absolute;left:1321px;top:445px" width="12" height="12" viewBox="0 0 12 12"><path d="M10.5 1V11" stroke="#838a9d" stroke-width="1.8"/><path d="M2 1.5L7 6L2 10.5" fill="none" stroke="#838a9d" stroke-width="1.8"/></svg>
<div style="position:absolute;left:1184px;top:182px;width:150px;height:242px;border:3px solid #fd2b2b"></div>
</body></html>
